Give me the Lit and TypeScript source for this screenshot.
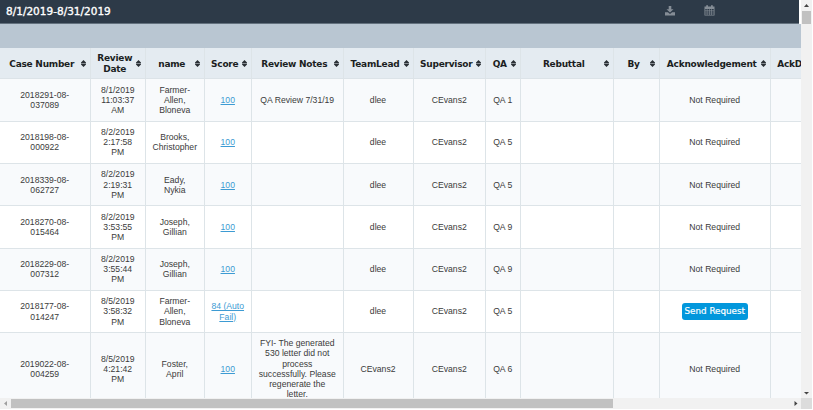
import { LitElement, html, css, svg } from "lit";
import { customElement } from "lit/decorators.js";

interface Column { label: string[]; width: number }

const columns: Column[] = [
  { label: ["Case Number"], width: 90.5 },
  { label: ["Review", "Date"], width: 55.5 },
  { label: ["name"], width: 58.5 },
  { label: ["Score"], width: 47.5 },
  { label: ["Review Notes"], width: 91.5 },
  { label: ["TeamLead"], width: 70 },
  { label: ["Supervisor"], width: 72.5 },
  { label: ["QA"], width: 34.5 },
  { label: ["Rebuttal"], width: 93.5 },
  { label: ["By"], width: 46 },
  { label: ["Acknowledgement"], width: 110.5 },
  { label: ["AckDate"], width: 61 },
];

const NR = "Not Required";
const rows: string[][] = [
  ["2018291-08-|037089", "8/1/2019|11:03:37|AM", "Farmer-|Allen,|Bloneva", "100", "QA Review 7/31/19", "dlee", "CEvans2", "QA 1", "", "", NR, ""],
  ["2018198-08-|000922", "8/2/2019|2:17:58|PM", "Brooks,|Christopher", "100", "", "dlee", "CEvans2", "QA 5", "", "", NR, ""],
  ["2018339-08-|062727", "8/2/2019|2:19:31|PM", "Eady,|Nykia", "100", "", "dlee", "CEvans2", "QA 5", "", "", NR, ""],
  ["2018270-08-|015464", "8/2/2019|3:53:55|PM", "Joseph,|Gillian", "100", "", "dlee", "CEvans2", "QA 9", "", "", NR, ""],
  ["2018229-08-|007312", "8/2/2019|3:55:44|PM", "Joseph,|Gillian", "100", "", "dlee", "CEvans2", "QA 9", "", "", NR, ""],
  ["2018177-08-|014247", "8/5/2019|3:58:32|PM", "Farmer-|Allen,|Bloneva", "84 (Auto|Fail)", "", "dlee", "CEvans2", "QA 5", "", "", "Send Request", ""],
  ["2019022-08-|004259", "8/5/2019|4:21:42|PM", "Foster,|April", "100", "FYI- The generated|530 letter did not|process|successfully. Please|regenerate the|letter.", "CEvans2", "CEvans2", "QA 6", "", "", NR, ""],
];

const template = columns.map((c) => `${c.width}px`).join(" ");

@customElement("app-root")
export class AppRoot extends LitElement {
  static styles = css`
    :host { display: block; width: 813px; height: 410px; overflow: hidden; background: #fff;
      font-family: "Liberation Sans", Arial, sans-serif; }
    .layout { display: grid; grid-template-columns: 801px 11px; grid-template-rows: 398px 11px; }
    .pane { overflow: hidden; }
    .bar { box-sizing: border-box; width: 799px; height: 24px; background: #2d3a48; border-bottom: 1px solid #63717e;
      display: flex; align-items: center; padding: 0 84px 2px 6px; }
    .title { color: #fff; font: 10.5px/14px "DejaVu Sans", Verdana, sans-serif; -webkit-text-stroke: .35px #fff; flex: 1; white-space: nowrap; }
    .bar svg { display: block; fill: #858d96; }
    .download { width: 10px; height: 10px; margin-right: 29px; }
    .calendar { width: 11px; height: 11px; }
    .band { height: 24px; background: #b9c6d2; }
    .row { display: grid; min-height: 42.3px; box-sizing: border-box; border-bottom: 1px solid #dde4e8; background: #fff; width: max-content; }
    .row.odd { background: #f8fafc; }
    .row.head { height: 31.4px; min-height: 0; background: #e4ebf1; border-bottom-color: #dce3e8; }
    .row.tall { height: 72px; }
    .cell { box-sizing: border-box; border-right: 1px solid #dde4e8; display: flex; align-items: center; justify-content: center;
      text-align: center; font-size: 8.65px; line-height: 10.1px; color: #3b3b3b; white-space: nowrap; }
    .head .cell { font: bold 9px/10.2px "DejaVu Sans", Verdana, sans-serif; letter-spacing: -.25px; color: #1b1e22; padding: 1px 4px 0 1px; }
    .label { flex: 1; display: flex; flex-direction: column; align-items: center; min-width: 0; }
    .sort { width: 5px; height: 7px; margin-left: -2px; fill: #2b3036; flex: none; }
    .link { color: #3d9bd3; text-decoration: underline; }
    .button { border: 0; border-radius: 3px; background: #0297dc; color: #fff; width: 66px; height: 17px; padding: 0; margin-top: 0;
      font: 8.75px/17px "DejaVu Sans", Verdana, sans-serif; -webkit-text-stroke: .2px #fff; white-space: nowrap; }
    .vscroll { background: #f1f1f1; display: flex; flex-direction: column; align-items: center; }
    .vscroll .thumb { width: 9px; height: 13px; background: #c1c1c1; margin-bottom: auto; }
    .hscroll { background: #f1f1f1; display: flex; align-items: center; }
    .hscroll .thumb { width: 602px; height: 9px; background: #c1c1c1; margin-right: auto; }
    .arrow { width: 11px; height: 11px; display: block; flex: none; fill: #444; }
    .arrow.off { fill: #a0a0a0; }
    .corner { background: #dcdcdc; }
  `;

  private renderLines(text: string) {
    return text.split("|").map((line, i) => html`${i ? html`<br>` : ""}${line}`);
  }

  private renderCell(text: string, col: number) {
    if (!text) return "";
    if (col === 3) return html`<a class="link">${this.renderLines(text)}</a>`;
    if (text === "Send Request") return html`<button class="button">${text}</button>`;
    return html`<span>${this.renderLines(text)}</span>`;
  }

  private arrow(d: string, off = false) {
    return html`<svg class="arrow ${off ? "off" : ""}" viewBox="0 0 11 11">${svg`<path d=${d}></path>`}</svg>`;
  }

  render() {
    return html`
      <div class="layout">
        <div class="pane">
          <div class="bar">
            <span class="title">8/1/2019-8/31/2019</span>
            <svg class="download" viewBox="0 0 10 10"><path d="M3.7 0h2.6v3.2h2.2L5 6.6 1.5 3.2h2.2zM0 6.2h2.9L5 8l2.1-1.8H10v3.3H0z"></path></svg>
            <svg class="calendar" viewBox="0 0 10 11"><path fill-rule="evenodd" d="M0 1.6h1.7V.2h1.8v1.4h3V.2h1.8v1.4H10v9H0zM.8 4.1v1.5h1.5V4.1zm2.1 0v1.5h1.7V4.1zm2.3 0v1.5h1.7V4.1zm2.3 0v1.5h1.7V4.1zM.8 6.2v1.5h1.5V6.2zm2.1 0v1.5h1.7V6.2zm2.3 0v1.5h1.7V6.2zm2.3 0v1.5h1.7V6.2zM.8 8.3v1.5h1.5V8.3zm2.1 0v1.5h1.7V8.3zm2.3 0v1.5h1.7V8.3zm2.3 0v1.5h1.7V8.3z"></path></svg>
          </div>
          <div class="band"></div>
          <div class="row head" style="grid-template-columns:${template}">
            ${columns.map((c) => html`<div class="cell">
              <span class="label">${c.label.map((l) => html`<span>${l}</span>`)}</span>
              <svg class="sort" viewBox="0 0 5 7"><path d="M2.5 0 5 2.6v.7H0v-.7zM0 3.7h5v.7L2.5 7 0 4.4z"></path></svg>
            </div>`)}
          </div>
          ${rows.map((r, i) => html`<div class="row ${i % 2 ? "" : "odd"} ${i === 6 ? "tall" : ""}" style="grid-template-columns:${template}">
            ${r.map((t, c) => html`<div class="cell">${this.renderCell(t, c)}</div>`)}
          </div>`)}
        </div>
        <div class="vscroll">${this.arrow("M5.5 4 8 7H3z")}<div class="thumb"></div>${this.arrow("M3 5h5L5.5 7.5z")}</div>
        <div class="hscroll">${this.arrow("M7 3v5L4 5.5z", true)}<div class="thumb"></div>${this.arrow("M4.5 3v5l3-2.5z")}</div>
        <div class="corner"></div>
      </div>
    `;
  }
}
